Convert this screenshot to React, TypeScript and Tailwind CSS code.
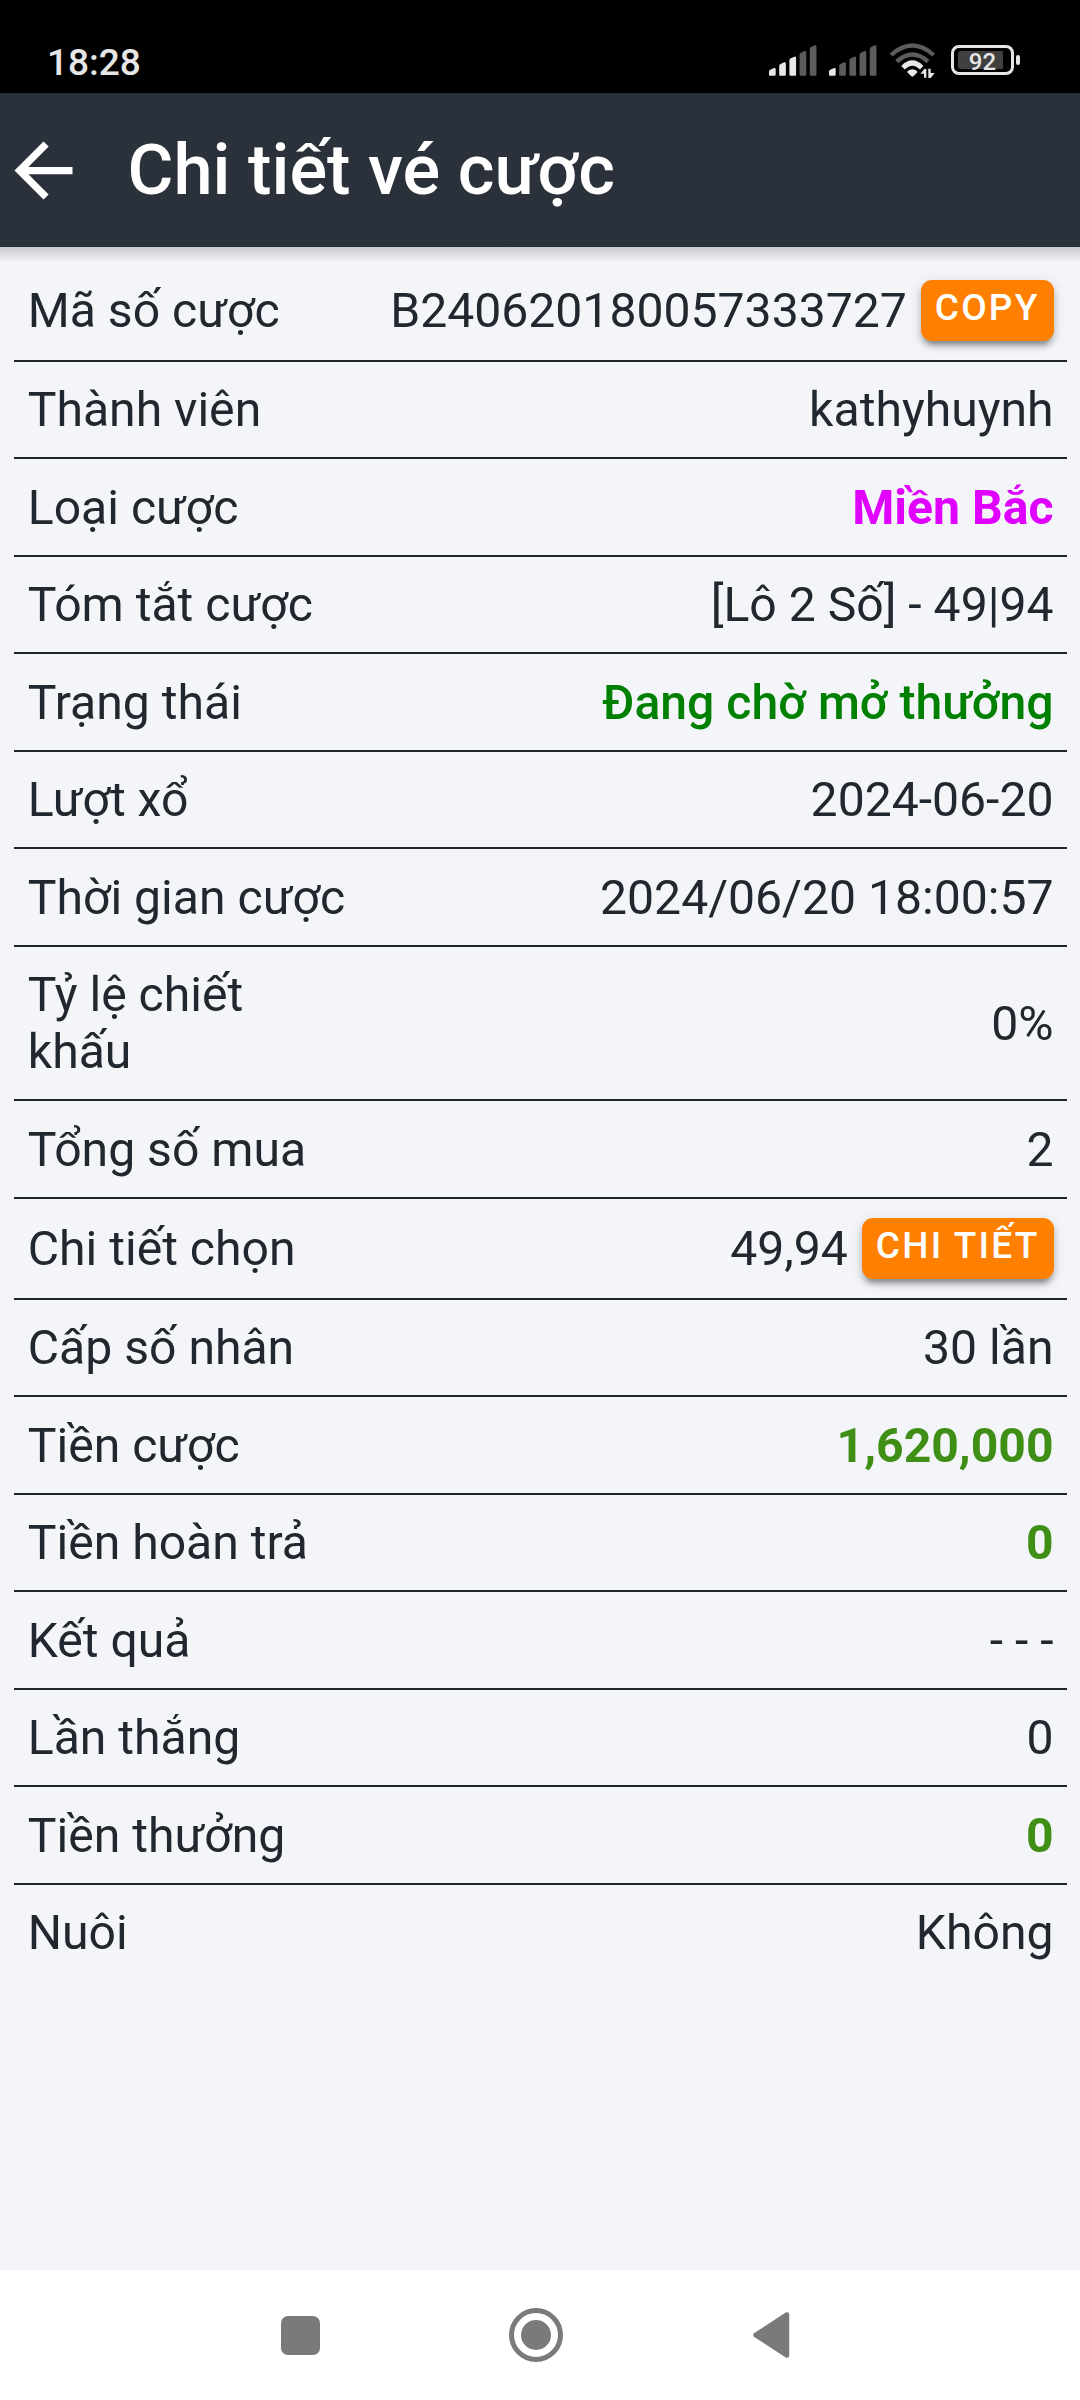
import React from "react";

type Row = {
  label: React.ReactNode;
  value: string;
  tone?: string;
  action?: string;
  height?: string;
};

const rows: Row[] = [
  { label: "Mã số cược", value: "B240620180057333727", action: "COPY", height: "h-[101px]" },
  { label: "Thành viên", value: "kathyhuynh" },
  { label: "Loại cược", value: "Miền Bắc", tone: "font-bold text-[#e000ff]" },
  { label: "Tóm tắt cược", value: "[Lô 2 Số] - 49|94" },
  { label: "Trạng thái", value: "Đang chờ mở thưởng", tone: "font-medium text-[#008000]" },
  { label: "Lượt xổ", value: "2024-06-20" },
  { label: "Thời gian cược", value: "2024/06/20 18:00:57" },
  { label: <>Tỷ lệ chiết<br />khấu</>, value: "0%", height: "h-[154.5px]" },
  { label: "Tổng số mua", value: "2" },
  { label: "Chi tiết chọn", value: "49,94", action: "CHI TIẾT", height: "h-[101px]" },
  { label: "Cấp số nhân", value: "30 lần" },
  { label: "Tiền cược", value: "1,620,000", tone: "font-bold text-[#3f8f17]" },
  { label: "Tiền hoàn trả", value: "0", tone: "font-bold text-[#3f8f17]" },
  { label: "Kết quả", value: "- - -" },
  { label: "Lần thắng", value: "0" },
  { label: "Tiền thưởng", value: "0", tone: "font-bold text-[#3f8f17]" },
  { label: "Nuôi", value: "Không" },
];

function Signal({ level }: { level: number }) {
  return (
    <svg className="h-[31px] w-12" viewBox="0 0 144 93">
      {[0, 1, 2, 3, 4].map((i) => {
        const x = i * 30.6;
        const top = 69 - i * 17;
        return (
          <path
            key={i}
            d={`M${x} ${top + 11}Q${x} ${top + 7} ${x + 4} ${top + 5}L${x + 15} ${top}Q${x + 20} ${top - 1} ${x + 20} ${top + 4}V89Q${x + 20} 92 ${x + 17} 92H${x + 3}Q${x} 92 ${x} 89Z`}
            fill={i < level ? "#e8e8e8" : "#5c5c5c"}
          />
        );
      })}
    </svg>
  );
}

function Wifi() {
  return (
    <svg className="ml-3 h-[36px] w-[48px]" viewBox="0 0 144 108" fill="none">
      <path d="M6 36Q70 -21 134 36" stroke="#5c5c5c" strokeWidth="13" strokeLinejoin="round" />
      <path d="M23 56Q70 13 117 56" stroke="#5c5c5c" strokeWidth="13" />
      <path d="M42 74Q70 46 98 74" stroke="#e8e8e8" strokeWidth="15" />
      <path d="M56 84Q70 73 84 84Q86 87 84 89L73 100Q70 102 67 100L56 89Q54 87 56 84Z" fill="#e8e8e8" />
      <path d="M94 92L106 78H112V104H105V92ZM118 77H125V90H137L125 105H118Z" fill="#e8e8e8" />
    </svg>
  );
}

function StatusBar() {
  return (
    <div className="flex h-[93px] items-start bg-black pl-[47px] pr-[60px] text-[#e6e6e6]">
      <span className="mt-[40.5px] text-[37px] leading-[44px] font-medium">18:28</span>
      <div className="ml-auto flex items-start pt-[45px]">
        <Signal level={3} />
        <div className="ml-3">
          <Signal level={1} />
        </div>
        <div className="-mt-[2px] flex">
          <Wifi />
        </div>
        <div className="ml-[14px] flex items-center gap-[2px]">
          <div className="flex h-[30px] w-[63px] items-center justify-center rounded-[8px] border-[3px] border-[#e6e6e6] p-1">
            <div className="flex h-[18px] w-full items-center justify-center rounded-[3px] bg-[linear-gradient(90deg,#404040_92%,transparent_92%)]">
              <span className="pt-[3px] text-[24px] leading-[18px] font-medium">92</span>
            </div>
          </div>
          <div className="h-[10px] w-1 rounded-[2px] bg-[#e6e6e6]" />
        </div>
      </div>
    </div>
  );
}

function Header() {
  return (
    <header className="relative z-10 flex h-[154px] items-center bg-[#2b313b] text-white">
      <svg className="h-[87px] w-[87px] shrink-0" viewBox="0 0 24 24" fill="currentColor">
        <path d="M20 11H7.83l5.59-5.59L12 4l-8 8 8 8 1.41-1.41L7.83 13H20v-2z" />
      </svg>
      <h1 className="ml-[40.5px] text-[70.4px] leading-[80px] font-medium">Chi tiết vé cược</h1>
      <div className="absolute inset-x-0 top-full h-[14px] bg-linear-to-b from-[#c8c9cc] to-[#eff0f3]" />
    </header>
  );
}

function DetailRow({ label, value, tone, action, height }: Row) {
  return (
    <div
      className={`flex shrink-0 items-center justify-between border-b-2 border-[#202329] pl-[13.75px] pr-[13.5px] last:border-transparent ${height ?? "h-[97.5px]"}`}
    >
      <span>{label}</span>
      <div className="flex items-center">
        <span className={tone}>{value}</span>
        {action && (
          <button className="ml-[14px] h-[61px] rounded-[11px] bg-[#ff7f00] px-[14px] pb-[4px] text-[37px] leading-[56px] font-medium tracking-[2.2px] text-white shadow-[0_8px_5px_-5px_rgba(0,0,0,0.25),0_5px_6px_rgba(0,0,0,0.2),0_3px_14px_rgba(0,0,0,0.12)]">
            {action}
          </button>
        )}
      </div>
    </div>
  );
}

function NavBar() {
  return (
    <nav className="flex h-[130px] items-center bg-white pl-[281px] text-[#7a7a7a]">
      <div className="h-[39px] w-[39px] rounded-[7px] bg-current" />
      <svg className="ml-[189px] h-[54px] w-[54px]" viewBox="0 0 54 54">
        <circle cx="27" cy="27" r="24.5" fill="none" stroke="currentColor" strokeWidth="5" />
        <circle cx="27" cy="27" r="15" fill="currentColor" />
      </svg>
      <svg className="ml-[190px] h-[46px] w-[37px]" viewBox="0 0 37 46">
        <path d="M2.5 23L34 2.5V43.5Z" fill="currentColor" stroke="currentColor" strokeWidth="4.5" strokeLinejoin="round" />
      </svg>
    </nav>
  );
}

export default function App() {
  return (
    <div className="flex h-[2400px] w-[1080px] flex-col overflow-hidden bg-[#f3f5f9] font-[Roboto,sans-serif]">
      <StatusBar />
      <Header />
      <main className="flex flex-1 flex-col pt-[13.8px] pr-[13px] pl-[14px] text-[48.125px] leading-[57px] text-[#21272e]">
        {rows.map((row, i) => (
          <DetailRow key={i} {...row} />
        ))}
      </main>
      <NavBar />
    </div>
  );
}
